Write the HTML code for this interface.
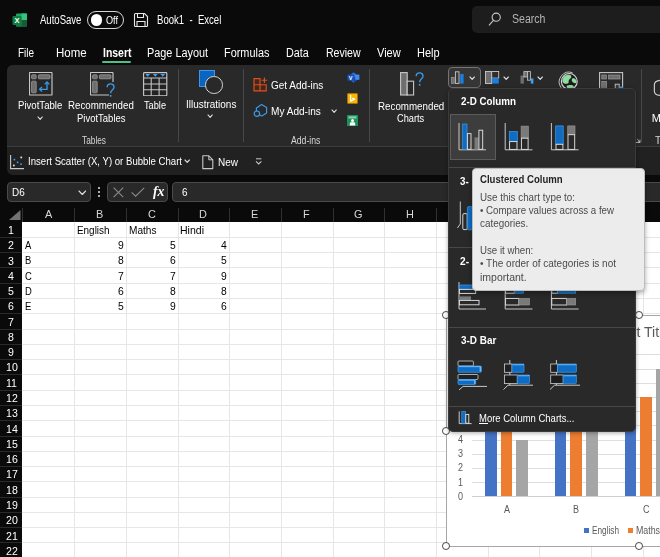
<!DOCTYPE html>
<html lang="en"><head><meta charset="utf-8"><title>Book1 - Excel</title>
<style>
html,body{margin:0;padding:0;}
body{width:660px;height:557px;overflow:hidden;background:#0a0a0a;position:relative;font-family:"Liberation Sans",sans-serif;}
.t{position:absolute;white-space:pre;display:block;will-change:opacity;}
.r{position:absolute;display:block;box-sizing:border-box;}
</style></head><body>
<svg class="r" style="left:12px;top:12px;" width="16" height="16" viewBox="0 0 16 16">
<rect x="4" y="1.5" width="11" height="13" rx="1.2" fill="#21a366"/>
<rect x="9.5" y="1.5" width="5.5" height="6.5" fill="#33c481"/>
<rect x="4" y="8" width="5.5" height="6.5" fill="#107c41"/>
<rect x="9.5" y="8" width="5.5" height="6.5" fill="#185c37"/>
<rect x="0.5" y="4" width="9" height="9" rx="1" fill="#107c41"/>
<text x="5" y="11.3" font-family="Liberation Sans, sans-serif" font-size="7.5" font-weight="700" fill="#fff" text-anchor="middle">X</text>
</svg>
<span class="t" style="left:40.40px;top:12.40px;font-size:12px;line-height:16px;color:#fff;transform:scaleX(0.7956);transform-origin:0 50%;">AutoSave</span>
<div class="r" style="left:87px;top:11px;width:37px;height:18px;background:transparent;border:1.3px solid #d8d8d8;border-radius:9px;"></div>
<div class="r" style="left:90.6px;top:14.1px;width:11.8px;height:11.8px;background:#fff;border-radius:50%;"></div>
<span class="t" style="left:105.80px;top:13.30px;font-size:11px;line-height:14px;color:#fff;transform:scaleX(0.8293);transform-origin:0 50%;">Off</span>
<svg class="r" style="left:133px;top:12px;" width="16" height="16" viewBox="0 0 16 16">
<path d="M1.5 2.5 a1 1 0 0 1 1 -1 H11.5 L14.5 4.5 V13.5 a1 1 0 0 1 -1 1 H2.5 a1 1 0 0 1 -1 -1 Z" fill="none" stroke="#e8e8e8" stroke-width="1.1"/>
<path d="M4.5 1.5 V5.5 H10.5 V1.5" fill="none" stroke="#e8e8e8" stroke-width="1.1"/>
<path d="M4 14.5 V9.5 H12 V14.5" fill="none" stroke="#e8e8e8" stroke-width="1.1"/>
</svg>
<span class="t" style="left:156.70px;top:12.40px;font-size:12px;line-height:16px;color:#fff;transform:scaleX(0.7968);transform-origin:0 50%;">Book1  -  Excel</span>
<div class="r" style="left:472px;top:6.3px;width:200px;height:26.5px;background:#1d1d1d;border-radius:5px;"></div>
<svg class="r" style="left:486px;top:10px;" width="16" height="18" viewBox="0 0 16 18"><circle cx="10.2" cy="7.2" r="4.1" fill="none" stroke="#c8c8c8" stroke-width="1.1"/><path d="M7.4 10.4 L3 15.4" stroke="#c8c8c8" stroke-width="1.1" fill="none"/></svg>
<span class="t" style="left:512.30px;top:11.00px;font-size:12.5px;line-height:16px;color:#b4b4b4;transform:scaleX(0.8433);transform-origin:0 50%;">Search</span>
<span class="t" style="left:18.20px;top:45.10px;font-size:12px;line-height:16px;color:#fff;transform:scaleX(0.8275);transform-origin:0 50%;">File</span>
<span class="t" style="left:55.60px;top:45.10px;font-size:12px;line-height:16px;color:#fff;transform:scaleX(0.9560);transform-origin:0 50%;">Home</span>
<span class="t" style="left:102.50px;top:45.10px;font-size:12px;line-height:16px;color:#fff;transform:scaleX(0.8721);transform-origin:0 50%;font-weight:700;">Insert</span>
<span class="t" style="left:146.50px;top:45.10px;font-size:12px;line-height:16px;color:#fff;transform:scaleX(0.9067);transform-origin:0 50%;">Page Layout</span>
<span class="t" style="left:224.40px;top:45.10px;font-size:12px;line-height:16px;color:#fff;transform:scaleX(0.9078);transform-origin:0 50%;">Formulas</span>
<span class="t" style="left:286.20px;top:45.10px;font-size:12px;line-height:16px;color:#fff;transform:scaleX(0.8995);transform-origin:0 50%;">Data</span>
<span class="t" style="left:325.80px;top:45.10px;font-size:12px;line-height:16px;color:#fff;transform:scaleX(0.8794);transform-origin:0 50%;">Review</span>
<span class="t" style="left:377.00px;top:45.10px;font-size:12px;line-height:16px;color:#fff;transform:scaleX(0.9188);transform-origin:0 50%;">View</span>
<span class="t" style="left:416.70px;top:45.10px;font-size:12px;line-height:16px;color:#fff;transform:scaleX(0.9157);transform-origin:0 50%;">Help</span>
<div class="r" style="left:102px;top:61px;width:29.4px;height:2px;background:#4cc088;border-radius:1px;"></div>
<div class="r" style="left:7px;top:65px;width:660px;height:110px;background:#212121;border-radius:6px 0 0 6px;"></div>
<div class="r" style="left:7px;top:65px;width:660px;height:81px;background:#292929;border-radius:6px 0 0 0;"></div>
<div class="r" style="left:7px;top:146px;width:660px;height:1px;background:#3c3c3c;"></div>
<div class="r" style="left:7px;top:181.5px;width:84px;height:20.5px;background:#292929;border:1px solid #4a4a4a;border-radius:4px;"></div>
<span class="t" style="left:11.80px;top:184.70px;font-size:11.5px;line-height:15px;color:#fff;transform:scaleX(0.8639);transform-origin:0 50%;">D6</span>
<div class="r" style="left:107px;top:181.5px;width:61.3px;height:20.5px;background:#292929;border:1px solid #4a4a4a;border-radius:4px;"></div>
<div class="r" style="left:171.7px;top:181.5px;width:500px;height:20.5px;background:#292929;border:1px solid #4a4a4a;border-radius:4px;"></div>
<span class="t" style="left:182.30px;top:185.20px;font-size:11px;line-height:14px;color:#fff;transform:scaleX(0.9000);transform-origin:0 50%;">6</span>
<div class="r" style="left:0px;top:207px;width:660px;height:350px;background:#0a0a0a;"></div>
<div class="r" style="left:22px;top:222px;width:638px;height:335px;background:#ffffff;"></div>
<div class="r" style="left:74px;top:222px;width:1px;height:335px;background:#e6e6e6;"></div>
<div class="r" style="left:126px;top:222px;width:1px;height:335px;background:#e6e6e6;"></div>
<div class="r" style="left:178px;top:222px;width:1px;height:335px;background:#e6e6e6;"></div>
<div class="r" style="left:229px;top:222px;width:1px;height:335px;background:#e6e6e6;"></div>
<div class="r" style="left:281px;top:222px;width:1px;height:335px;background:#e6e6e6;"></div>
<div class="r" style="left:333px;top:222px;width:1px;height:335px;background:#e6e6e6;"></div>
<div class="r" style="left:384px;top:222px;width:1px;height:335px;background:#e6e6e6;"></div>
<div class="r" style="left:436px;top:222px;width:1px;height:335px;background:#e6e6e6;"></div>
<div class="r" style="left:488px;top:222px;width:1px;height:335px;background:#e6e6e6;"></div>
<div class="r" style="left:539px;top:222px;width:1px;height:335px;background:#e6e6e6;"></div>
<div class="r" style="left:591px;top:222px;width:1px;height:335px;background:#e6e6e6;"></div>
<div class="r" style="left:643px;top:222px;width:1px;height:335px;background:#e6e6e6;"></div>
<div class="r" style="left:694px;top:222px;width:1px;height:335px;background:#e6e6e6;"></div>
<div class="r" style="left:22px;top:237px;width:638px;height:1px;background:#e6e6e6;"></div>
<div class="r" style="left:22px;top:252px;width:638px;height:1px;background:#e6e6e6;"></div>
<div class="r" style="left:22px;top:267px;width:638px;height:1px;background:#e6e6e6;"></div>
<div class="r" style="left:22px;top:283px;width:638px;height:1px;background:#e6e6e6;"></div>
<div class="r" style="left:22px;top:298px;width:638px;height:1px;background:#e6e6e6;"></div>
<div class="r" style="left:22px;top:313px;width:638px;height:1px;background:#e6e6e6;"></div>
<div class="r" style="left:22px;top:329px;width:638px;height:1px;background:#e6e6e6;"></div>
<div class="r" style="left:22px;top:344px;width:638px;height:1px;background:#e6e6e6;"></div>
<div class="r" style="left:22px;top:359px;width:638px;height:1px;background:#e6e6e6;"></div>
<div class="r" style="left:22px;top:374px;width:638px;height:1px;background:#e6e6e6;"></div>
<div class="r" style="left:22px;top:390px;width:638px;height:1px;background:#e6e6e6;"></div>
<div class="r" style="left:22px;top:405px;width:638px;height:1px;background:#e6e6e6;"></div>
<div class="r" style="left:22px;top:420px;width:638px;height:1px;background:#e6e6e6;"></div>
<div class="r" style="left:22px;top:436px;width:638px;height:1px;background:#e6e6e6;"></div>
<div class="r" style="left:22px;top:451px;width:638px;height:1px;background:#e6e6e6;"></div>
<div class="r" style="left:22px;top:466px;width:638px;height:1px;background:#e6e6e6;"></div>
<div class="r" style="left:22px;top:481px;width:638px;height:1px;background:#e6e6e6;"></div>
<div class="r" style="left:22px;top:497px;width:638px;height:1px;background:#e6e6e6;"></div>
<div class="r" style="left:22px;top:512px;width:638px;height:1px;background:#e6e6e6;"></div>
<div class="r" style="left:22px;top:527px;width:638px;height:1px;background:#e6e6e6;"></div>
<div class="r" style="left:22px;top:542px;width:638px;height:1px;background:#e6e6e6;"></div>
<div class="r" style="left:22px;top:558px;width:638px;height:1px;background:#e6e6e6;"></div>
<span class="t" style="left:44.61px;top:207.30px;font-size:11.5px;line-height:15px;color:#d6d6d6;transform:scaleX(0.9500);transform-origin:0 50%;">A</span>
<div class="r" style="left:22px;top:208px;width:1px;height:14px;background:#303030;"></div>
<span class="t" style="left:96.31px;top:207.30px;font-size:11.5px;line-height:15px;color:#d6d6d6;transform:scaleX(0.9500);transform-origin:0 50%;">B</span>
<div class="r" style="left:74px;top:208px;width:1px;height:14px;background:#303030;"></div>
<span class="t" style="left:147.71px;top:207.30px;font-size:11.5px;line-height:15px;color:#d6d6d6;transform:scaleX(0.9500);transform-origin:0 50%;">C</span>
<div class="r" style="left:126px;top:208px;width:1px;height:14px;background:#303030;"></div>
<span class="t" style="left:199.41px;top:207.30px;font-size:11.5px;line-height:15px;color:#d6d6d6;transform:scaleX(0.9500);transform-origin:0 50%;">D</span>
<div class="r" style="left:178px;top:208px;width:1px;height:14px;background:#303030;"></div>
<span class="t" style="left:251.41px;top:207.30px;font-size:11.5px;line-height:15px;color:#d6d6d6;transform:scaleX(0.9500);transform-origin:0 50%;">E</span>
<div class="r" style="left:229px;top:208px;width:1px;height:14px;background:#303030;"></div>
<span class="t" style="left:303.41px;top:207.30px;font-size:11.5px;line-height:15px;color:#d6d6d6;transform:scaleX(0.9500);transform-origin:0 50%;">F</span>
<div class="r" style="left:281px;top:208px;width:1px;height:14px;background:#303030;"></div>
<span class="t" style="left:354.20px;top:207.30px;font-size:11.5px;line-height:15px;color:#d6d6d6;transform:scaleX(0.9500);transform-origin:0 50%;">G</span>
<div class="r" style="left:333px;top:208px;width:1px;height:14px;background:#303030;"></div>
<span class="t" style="left:406.21px;top:207.30px;font-size:11.5px;line-height:15px;color:#d6d6d6;transform:scaleX(0.9500);transform-origin:0 50%;">H</span>
<div class="r" style="left:384px;top:208px;width:1px;height:14px;background:#303030;"></div>
<span class="t" style="left:460.33px;top:207.30px;font-size:11.5px;line-height:15px;color:#d6d6d6;transform:scaleX(0.9500);transform-origin:0 50%;">I</span>
<div class="r" style="left:436px;top:208px;width:1px;height:14px;background:#303030;"></div>
<span class="t" style="left:510.82px;top:207.30px;font-size:11.5px;line-height:15px;color:#d6d6d6;transform:scaleX(0.9500);transform-origin:0 50%;">J</span>
<div class="r" style="left:488px;top:208px;width:1px;height:14px;background:#303030;"></div>
<span class="t" style="left:561.61px;top:207.30px;font-size:11.5px;line-height:15px;color:#d6d6d6;transform:scaleX(0.9500);transform-origin:0 50%;">K</span>
<div class="r" style="left:539px;top:208px;width:1px;height:14px;background:#303030;"></div>
<span class="t" style="left:613.91px;top:207.30px;font-size:11.5px;line-height:15px;color:#d6d6d6;transform:scaleX(0.9500);transform-origin:0 50%;">L</span>
<div class="r" style="left:591px;top:208px;width:1px;height:14px;background:#303030;"></div>
<span class="t" style="left:8.46px;top:222.94px;font-size:11.5px;line-height:15px;color:#fff;transform:scaleX(0.9200);transform-origin:0 50%;">1</span>
<div class="r" style="left:0px;top:237px;width:22px;height:1px;background:#2a2a2a;"></div>
<span class="t" style="left:8.46px;top:238.22px;font-size:11.5px;line-height:15px;color:#fff;transform:scaleX(0.9200);transform-origin:0 50%;">2</span>
<div class="r" style="left:0px;top:252px;width:22px;height:1px;background:#2a2a2a;"></div>
<span class="t" style="left:8.46px;top:253.50px;font-size:11.5px;line-height:15px;color:#fff;transform:scaleX(0.9200);transform-origin:0 50%;">3</span>
<div class="r" style="left:0px;top:267px;width:22px;height:1px;background:#2a2a2a;"></div>
<span class="t" style="left:8.46px;top:268.78px;font-size:11.5px;line-height:15px;color:#fff;transform:scaleX(0.9200);transform-origin:0 50%;">4</span>
<div class="r" style="left:0px;top:283px;width:22px;height:1px;background:#2a2a2a;"></div>
<span class="t" style="left:8.46px;top:284.06px;font-size:11.5px;line-height:15px;color:#fff;transform:scaleX(0.9200);transform-origin:0 50%;">5</span>
<div class="r" style="left:0px;top:298px;width:22px;height:1px;background:#2a2a2a;"></div>
<span class="t" style="left:8.46px;top:299.34px;font-size:11.5px;line-height:15px;color:#fff;transform:scaleX(0.9200);transform-origin:0 50%;">6</span>
<div class="r" style="left:0px;top:313px;width:22px;height:1px;background:#2a2a2a;"></div>
<span class="t" style="left:8.46px;top:314.62px;font-size:11.5px;line-height:15px;color:#fff;transform:scaleX(0.9200);transform-origin:0 50%;">7</span>
<div class="r" style="left:0px;top:329px;width:22px;height:1px;background:#2a2a2a;"></div>
<span class="t" style="left:8.46px;top:329.90px;font-size:11.5px;line-height:15px;color:#fff;transform:scaleX(0.9200);transform-origin:0 50%;">8</span>
<div class="r" style="left:0px;top:344px;width:22px;height:1px;background:#2a2a2a;"></div>
<span class="t" style="left:8.46px;top:345.18px;font-size:11.5px;line-height:15px;color:#fff;transform:scaleX(0.9200);transform-origin:0 50%;">9</span>
<div class="r" style="left:0px;top:359px;width:22px;height:1px;background:#2a2a2a;"></div>
<span class="t" style="left:5.52px;top:360.46px;font-size:11.5px;line-height:15px;color:#fff;transform:scaleX(0.9200);transform-origin:0 50%;">10</span>
<div class="r" style="left:0px;top:374px;width:22px;height:1px;background:#2a2a2a;"></div>
<span class="t" style="left:5.91px;top:375.74px;font-size:11.5px;line-height:15px;color:#fff;transform:scaleX(0.9200);transform-origin:0 50%;">11</span>
<div class="r" style="left:0px;top:390px;width:22px;height:1px;background:#2a2a2a;"></div>
<span class="t" style="left:5.52px;top:391.02px;font-size:11.5px;line-height:15px;color:#fff;transform:scaleX(0.9200);transform-origin:0 50%;">12</span>
<div class="r" style="left:0px;top:405px;width:22px;height:1px;background:#2a2a2a;"></div>
<span class="t" style="left:5.52px;top:406.30px;font-size:11.5px;line-height:15px;color:#fff;transform:scaleX(0.9200);transform-origin:0 50%;">13</span>
<div class="r" style="left:0px;top:420px;width:22px;height:1px;background:#2a2a2a;"></div>
<span class="t" style="left:5.52px;top:421.58px;font-size:11.5px;line-height:15px;color:#fff;transform:scaleX(0.9200);transform-origin:0 50%;">14</span>
<div class="r" style="left:0px;top:436px;width:22px;height:1px;background:#2a2a2a;"></div>
<span class="t" style="left:5.52px;top:436.86px;font-size:11.5px;line-height:15px;color:#fff;transform:scaleX(0.9200);transform-origin:0 50%;">15</span>
<div class="r" style="left:0px;top:451px;width:22px;height:1px;background:#2a2a2a;"></div>
<span class="t" style="left:5.52px;top:452.14px;font-size:11.5px;line-height:15px;color:#fff;transform:scaleX(0.9200);transform-origin:0 50%;">16</span>
<div class="r" style="left:0px;top:466px;width:22px;height:1px;background:#2a2a2a;"></div>
<span class="t" style="left:5.52px;top:467.42px;font-size:11.5px;line-height:15px;color:#fff;transform:scaleX(0.9200);transform-origin:0 50%;">17</span>
<div class="r" style="left:0px;top:481px;width:22px;height:1px;background:#2a2a2a;"></div>
<span class="t" style="left:5.52px;top:482.70px;font-size:11.5px;line-height:15px;color:#fff;transform:scaleX(0.9200);transform-origin:0 50%;">18</span>
<div class="r" style="left:0px;top:497px;width:22px;height:1px;background:#2a2a2a;"></div>
<span class="t" style="left:5.52px;top:497.98px;font-size:11.5px;line-height:15px;color:#fff;transform:scaleX(0.9200);transform-origin:0 50%;">19</span>
<div class="r" style="left:0px;top:512px;width:22px;height:1px;background:#2a2a2a;"></div>
<span class="t" style="left:5.52px;top:513.26px;font-size:11.5px;line-height:15px;color:#fff;transform:scaleX(0.9200);transform-origin:0 50%;">20</span>
<div class="r" style="left:0px;top:527px;width:22px;height:1px;background:#2a2a2a;"></div>
<span class="t" style="left:5.52px;top:528.54px;font-size:11.5px;line-height:15px;color:#fff;transform:scaleX(0.9200);transform-origin:0 50%;">21</span>
<div class="r" style="left:0px;top:542px;width:22px;height:1px;background:#2a2a2a;"></div>
<span class="t" style="left:5.52px;top:543.82px;font-size:11.5px;line-height:15px;color:#fff;transform:scaleX(0.9200);transform-origin:0 50%;">22</span>
<div class="r" style="left:0px;top:558px;width:22px;height:1px;background:#2a2a2a;"></div>
<svg class="r" style="left:9px;top:210px;" width="12" height="10.5" viewBox="0 0 12 10.5"><path d="M11.5 0 V10 H0 Z" fill="#727272"/></svg>
<svg class="r" style="left:28.8px;top:71.8px;" width="24" height="24" viewBox="0 0 24 24"><rect x="0.5" y="0.5" width="22.5" height="22.5" rx="0.6" fill="#262626" stroke="#c8c8c8" stroke-width="1.15"/>
<rect x="2.6" y="2.8" width="4.6" height="4" rx="0.8" fill="#6e6e6e" stroke="#9a9a9a" stroke-width="0.8"/>
<rect x="9.4" y="2.8" width="11.6" height="4" rx="0.8" fill="#6e6e6e" stroke="#9a9a9a" stroke-width="0.8"/>
<rect x="2.6" y="9.2" width="4.6" height="11.6" rx="0.8" fill="#6e6e6e" stroke="#9a9a9a" stroke-width="0.8"/><path d="M10.8 17.3 H18 V10.2" fill="none" stroke="#3a9ae6" stroke-width="1.3"/>
<path d="M13 15 L10.6 17.3 L13 19.6" fill="none" stroke="#3a9ae6" stroke-width="1.3"/>
<path d="M15.7 12.4 L18 10 L20.3 12.4" fill="none" stroke="#3a9ae6" stroke-width="1.3"/></svg>
<span class="t" style="left:18.20px;top:98.20px;font-size:11px;line-height:14px;color:#fff;transform:scaleX(0.8729);transform-origin:0 50%;">PivotTable</span>
<svg class="r" style="left:37.2px;top:115.6px;" width="6.3" height="4.3" viewBox="0 0 6.3 4.3"><path d="M1 1 L3.15 3.30 L5.3 1" fill="none" stroke="#e0e0e0" stroke-width="1.1" stroke-linecap="round" stroke-linejoin="round"/></svg>
<svg class="r" style="left:90px;top:71.8px;" width="24" height="24" viewBox="0 0 24 24"><rect x="0.5" y="0.5" width="22.5" height="22.5" rx="0.6" fill="#262626" stroke="#c8c8c8" stroke-width="1.15"/>
<rect x="2.6" y="2.8" width="4.6" height="4" rx="0.8" fill="#6e6e6e" stroke="#9a9a9a" stroke-width="0.8"/>
<rect x="9.4" y="2.8" width="11.6" height="4" rx="0.8" fill="#6e6e6e" stroke="#9a9a9a" stroke-width="0.8"/>
<rect x="2.6" y="9.2" width="4.6" height="11.6" rx="0.8" fill="#6e6e6e" stroke="#9a9a9a" stroke-width="0.8"/></svg>
<div class="r" style="left:108.6px;top:82px;width:8px;height:15px;background:#292929;"></div>
<svg class="r" style="left:106.3px;top:83px;" width="10" height="16" viewBox="0 0 10 16"><g transform="scale(1.000)"><path d="M1.2 4.2 C1.2 -0.2 8 -0.2 8 4 C8 7 4.6 7 4.6 10.2" fill="none" stroke="#3a9ae6" stroke-width="1.4"/><rect x="3.8" y="12" width="1.7" height="1.7" fill="#3a9ae6"/></g></svg>
<span class="t" style="left:68.20px;top:98.40px;font-size:11px;line-height:14px;color:#fff;transform:scaleX(0.8821);transform-origin:0 50%;">Recommended</span>
<span class="t" style="left:77.30px;top:111.40px;font-size:11px;line-height:14px;color:#fff;transform:scaleX(0.8622);transform-origin:0 50%;">PivotTables</span>
<svg class="r" style="left:143px;top:71.5px;" width="25" height="24.5" viewBox="0 0 25 24.5"><rect x="0.6" y="0.6" width="23.2" height="23.2" rx="0.8" fill="#232323" stroke="#c8c8c8" stroke-width="1.15"/>
<path d="M0.6 6 H23.8 M0.6 11.9 H23.8 M0.6 17.8 H23.8 M8.2 6 V23.8 M16.1 6 V23.8" stroke="#c8c8c8" stroke-width="1.05" fill="none"/>
<path d="M2.3 2 H7 L4.65 4.8 Z M9.9 2 H14.6 L12.25 4.8 Z M17.4 2 H22.1 L19.75 4.8 Z" fill="#3aa8ff"/></svg>
<span class="t" style="left:144.00px;top:98.40px;font-size:11px;line-height:14px;color:#fff;transform:scaleX(0.8366);transform-origin:0 50%;">Table</span>
<span class="t" style="left:81.80px;top:132.60px;font-size:11px;line-height:14px;color:#d6d6d6;transform:scaleX(0.7548);transform-origin:0 50%;">Tables</span>
<div class="r" style="left:178.2px;top:69px;width:1px;height:73px;background:#484848;"></div>
<div class="r" style="left:243.4px;top:69px;width:1px;height:73px;background:#484848;"></div>
<div class="r" style="left:369px;top:69px;width:1px;height:73px;background:#484848;"></div>
<div class="r" style="left:641px;top:69px;width:1px;height:73px;background:#484848;"></div>
<div class="r" style="left:199px;top:70.4px;width:16.2px;height:16.2px;background:#0a64c0;border:1px solid #3f97e8;"></div>
<div class="r" style="left:205.4px;top:76.2px;width:17.6px;height:17.6px;background:#292929;border:1.5px solid #d4d4d4;border-radius:50%;"></div>
<span class="t" style="left:185.90px;top:96.70px;font-size:11px;line-height:14px;color:#fff;transform:scaleX(0.9059);transform-origin:0 50%;">Illustrations</span>
<svg class="r" style="left:207.3px;top:114.3px;" width="6.3" height="4.3" viewBox="0 0 6.3 4.3"><path d="M1 1 L3.15 3.30 L5.3 1" fill="none" stroke="#e0e0e0" stroke-width="1.1" stroke-linecap="round" stroke-linejoin="round"/></svg>
<svg class="r" style="left:253.4px;top:77px;" width="15" height="15" viewBox="0 0 15 15"><path d="M1 1.6 H7 V13.8 H1 Z M1 7.7 H13.2 V13.8 H7" fill="#5a2413" fill-opacity="0.55" stroke="#e0501e" stroke-width="1.15" stroke-linejoin="miter"/>
<path d="M11.4 0.4 V6 M8.6 3.2 H14.2" stroke="#e0501e" stroke-width="1.15" fill="none"/></svg>
<span class="t" style="left:271.00px;top:78.00px;font-size:11px;line-height:14px;color:#fff;transform:scaleX(0.9099);transform-origin:0 50%;">Get Add-ins</span>
<svg class="r" style="left:253px;top:103px;" width="16" height="15" viewBox="0 0 16 15"><path d="M3.4 8 V5 L8.6 1.4 L13.6 4.5 V10 L8.8 13 L7.2 12.2" fill="none" stroke="#3a9ae6" stroke-width="1.2" stroke-linejoin="round" stroke-linecap="round"/>
<circle cx="3.9" cy="10.7" r="2.7" fill="none" stroke="#3a9ae6" stroke-width="1.2"/></svg>
<span class="t" style="left:271.00px;top:104.30px;font-size:11px;line-height:14px;color:#fff;transform:scaleX(0.9153);transform-origin:0 50%;">My Add-ins</span>
<svg class="r" style="left:330.6px;top:109.2px;" width="6.3" height="4.3" viewBox="0 0 6.3 4.3"><path d="M1 1 L3.15 3.30 L5.3 1" fill="none" stroke="#e0e0e0" stroke-width="1.1" stroke-linecap="round" stroke-linejoin="round"/></svg>
<span class="t" style="left:291.40px;top:132.60px;font-size:11px;line-height:14px;color:#d6d6d6;transform:scaleX(0.7883);transform-origin:0 50%;">Add-ins</span>
<svg class="r" style="left:346.5px;top:72px;" width="13" height="11.5" viewBox="0 0 13 11.5"><path d="M6.6 0.2 L11.4 4 V7 L6.6 10.8 L1.8 7 V4 Z" fill="#2a6fd8"/>
<path d="M6.6 5.5 L11.4 4 V7 L6.6 10.8 Z" fill="#1746a8"/>
<rect x="8.2" y="2.6" width="4.2" height="5.2" fill="#3f8cf0"/>
<rect x="0.4" y="2.6" width="6.4" height="6.2" rx="0.8" fill="#1550b8"/>
<text x="3.6" y="7.9" font-family="Liberation Sans, sans-serif" font-size="5.6" font-weight="700" fill="#fff" text-anchor="middle">V</text></svg>
<svg class="r" style="left:347.3px;top:93px;" width="11" height="11" viewBox="0 0 11 11"><rect x="-0.5" y="-0.5" width="12" height="12" fill="#15152e"/><rect x="0.4" y="0.4" width="10.2" height="10.2" fill="#fbb400"/><path d="M3.6 2 V8.2 L7.6 6.2 L5.2 5" fill="none" stroke="#fff" stroke-width="1.3" stroke-linejoin="round"/></svg>
<svg class="r" style="left:347.3px;top:115px;" width="11" height="11" viewBox="0 0 11 11"><rect width="11" height="11" fill="#1e8e5a"/><rect x="1.5" y="1.3" width="8" height="2.2" fill="#7fd3a6"/><circle cx="5.5" cy="5.4" r="1.5" fill="#fff"/><path d="M2.8 10.5 V8.6 a1.4 1.4 0 0 1 1.4 -1.4 H6.8 a1.4 1.4 0 0 1 1.4 1.4 V10.5 Z" fill="#fff"/></svg>
<svg class="r" style="left:399.5px;top:71.5px;" width="15" height="24" viewBox="0 0 15 24"><rect x="0.6" y="0.6" width="6.6" height="22.4" fill="#6e6e6e" stroke="#c8c8c8" stroke-width="1.1"/>
<rect x="7.2" y="9.2" width="6.4" height="13.8" fill="#292929" stroke="#c8c8c8" stroke-width="1.1"/></svg>
<svg class="r" style="left:415px;top:72px;" width="10" height="16" viewBox="0 0 10 16"><g transform="scale(1.000)"><path d="M1.2 4.2 C1.2 -0.2 8 -0.2 8 4 C8 7 4.6 7 4.6 10.2" fill="none" stroke="#3a9ae6" stroke-width="1.4"/><rect x="3.8" y="12" width="1.7" height="1.7" fill="#3a9ae6"/></g></svg>
<span class="t" style="left:377.70px;top:98.50px;font-size:11px;line-height:14px;color:#fff;transform:scaleX(0.8888);transform-origin:0 50%;">Recommended</span>
<span class="t" style="left:397.40px;top:111.40px;font-size:11px;line-height:14px;color:#fff;transform:scaleX(0.8395);transform-origin:0 50%;">Charts</span>
<div class="r" style="left:448px;top:67px;width:32.5px;height:20.5px;background:#363636;border:1px solid #757575;border-radius:4px;"></div>
<svg class="r" style="left:451px;top:71px;" width="14" height="13" viewBox="0 0 14 13"><rect x="0.4" y="6.4" width="2.8" height="6" fill="#6e6e6e" stroke="#9a9a9a" stroke-width="0.7"/>
<rect x="4.4" y="0.8" width="3.6" height="11.6" fill="#3a3a3a" stroke="#c8c8c8" stroke-width="0.9"/>
<rect x="9.2" y="3" width="3.4" height="9.6" fill="#1a7fe0"/></svg>
<svg class="r" style="left:468.8px;top:75.8px;" width="6.4" height="4.3" viewBox="0 0 6.4 4.3"><path d="M1 1 L3.20 3.30 L5.4 1" fill="none" stroke="#e0e0e0" stroke-width="1.1" stroke-linecap="round" stroke-linejoin="round"/></svg>
<svg class="r" style="left:485px;top:71px;" width="15" height="13" viewBox="0 0 15 13"><rect x="0.5" y="0.5" width="6.2" height="12" fill="#6e6e6e" stroke="#c8c8c8" stroke-width="0.9"/>
<rect x="6.7" y="0.5" width="7" height="6.6" fill="#2e2e2e" stroke="#c8c8c8" stroke-width="0.9"/>
<rect x="7" y="7.2" width="6.8" height="5.4" fill="#1a7fe0"/></svg>
<svg class="r" style="left:503.2px;top:75.8px;" width="6.4" height="4.3" viewBox="0 0 6.4 4.3"><path d="M1 1 L3.20 3.30 L5.4 1" fill="none" stroke="#e0e0e0" stroke-width="1.1" stroke-linecap="round" stroke-linejoin="round"/></svg>
<svg class="r" style="left:519.5px;top:71px;" width="15" height="13" viewBox="0 0 15 13"><rect x="0.5" y="4.6" width="3.4" height="8" fill="#6e6e6e"/>
<rect x="3.9" y="0.6" width="3.6" height="5.4" fill="#6e6e6e" stroke="#c8c8c8" stroke-width="0.8"/>
<rect x="7.5" y="0.6" width="3" height="8.6" fill="#3a3a3a" stroke="#c8c8c8" stroke-width="0.8"/>
<rect x="10.8" y="7.4" width="2.6" height="5.2" fill="#3aa0f3"/></svg>
<svg class="r" style="left:537.4000000000001px;top:75.8px;" width="6.4" height="4.3" viewBox="0 0 6.4 4.3"><path d="M1 1 L3.20 3.30 L5.4 1" fill="none" stroke="#e0e0e0" stroke-width="1.1" stroke-linecap="round" stroke-linejoin="round"/></svg>
<svg class="r" style="left:557.5px;top:71.3px;" width="22" height="22" viewBox="0 0 22 22"><path d="M3.2 16.8 A9.8 9.8 0 0 1 14.6 1.8" fill="none" stroke="#bdbdbd" stroke-width="1"/>
<circle cx="11.3" cy="10.4" r="7.9" fill="#1c1c1c" stroke="#d8d8d8" stroke-width="1.1"/>
<path d="M6.4 5.2 C8.6 3.4 12.4 3 13.2 5.2 C13.8 7 11.6 7.6 10.8 9.2 C10.2 10.8 11.4 12 9.6 12.6 C7.6 13.2 5 12.4 4.4 10.4 C4 8.4 5 6.4 6.4 5.2 Z" fill="#8fdca3"/>
<path d="M14.2 7.6 C16 6.4 18.4 8 18.6 10.4 C18.6 12.2 17 12.6 15.6 11.8 C14 11 13 9 14.2 7.6 Z" fill="#8fdca3"/>
<path d="M9.2 14.6 C11.4 13.6 15 14 15.8 15.4 C15 17.2 12.2 18 10 17.4 C8.6 16.8 8.2 15.2 9.2 14.6 Z" fill="#8fdca3"/></svg>
<svg class="r" style="left:599px;top:71.5px;" width="25" height="24" viewBox="0 0 25 24"><rect x="0.6" y="0.6" width="23" height="23" fill="none" stroke="#c8c8c8" stroke-width="1.1"/>
<rect x="2.8" y="3" width="4.6" height="4" fill="#6e6e6e" stroke="#9a9a9a" stroke-width="0.7"/>
<rect x="9.6" y="3" width="11.4" height="4" fill="#6e6e6e" stroke="#9a9a9a" stroke-width="0.7"/>
<rect x="2.8" y="9.4" width="4.6" height="12" fill="#6e6e6e" stroke="#9a9a9a" stroke-width="0.7"/>
<rect x="16.2" y="12.2" width="4" height="10" fill="#3a3a3a" stroke="#c8c8c8" stroke-width="0.9"/>
<rect x="20.2" y="14.6" width="3.6" height="8" fill="#3aa0f3"/></svg>
<svg class="r" style="left:653px;top:79px;" width="8" height="17" viewBox="0 0 8 17"><path d="M7.8 1.2 C3.4 1.6 1.4 2.8 1.4 5.4 V12.4 C1.4 15 3.4 16 7.8 16.6" fill="none" stroke="#c8c8c8" stroke-width="1.2"/></svg>
<span class="t" style="left:651.70px;top:111.30px;font-size:11px;line-height:14px;color:#fff;">M</span>
<span class="t" style="left:654.60px;top:132.70px;font-size:11px;line-height:14px;color:#d6d6d6;transform:scaleX(0.9000);transform-origin:0 50%;">Te</span>
<svg class="r" style="left:635px;top:136.5px;" width="6" height="6" viewBox="0 0 6 6"><path d="M0.5 0.5 V5.5 H5.5 M2.2 2 L5 4.8 M5 2.6 V4.8 H2.8" fill="none" stroke="#c8c8c8" stroke-width="0.8"/></svg>
<svg class="r" style="left:10px;top:155px;" width="15" height="15" viewBox="0 0 15 15"><path d="M0.6 0 V13.6 H14" fill="none" stroke="#c8c8c8" stroke-width="1.1"/>
<rect x="3" y="9.6" width="1.7" height="1.7" fill="#e0e0e0"/><rect x="3.6" y="3.8" width="1.6" height="1.6" fill="#3aa0f3"/>
<rect x="6.8" y="6.6" width="1.6" height="1.6" fill="#3aa0f3"/><rect x="10.4" y="1.6" width="1.7" height="1.7" fill="#e8e8e8"/><rect x="10.2" y="8.4" width="1.6" height="1.6" fill="#3aa0f3"/></svg>
<span class="t" style="left:27.70px;top:154.20px;font-size:11px;line-height:14px;color:#fff;transform:scaleX(0.8726);transform-origin:0 50%;">Insert Scatter (X, Y) or Bubble Chart</span>
<svg class="r" style="left:183.8px;top:158.8px;" width="6.4" height="4.3" viewBox="0 0 6.4 4.3"><path d="M1 1 L3.20 3.30 L5.4 1" fill="none" stroke="#e0e0e0" stroke-width="1.1" stroke-linecap="round" stroke-linejoin="round"/></svg>
<svg class="r" style="left:202px;top:154.5px;" width="12" height="15" viewBox="0 0 12 15"><path d="M0.8 0.8 H6.8 L10.8 4.8 V13.6 H0.8 Z" fill="none" stroke="#c8c8c8" stroke-width="1.1" stroke-linejoin="round"/><path d="M6.8 0.8 V4.8 H10.8" fill="none" stroke="#c8c8c8" stroke-width="1"/></svg>
<span class="t" style="left:217.50px;top:154.50px;font-size:11px;line-height:14px;color:#fff;transform:scaleX(0.9089);transform-origin:0 50%;">New</span>
<svg class="r" style="left:254.5px;top:158px;" width="8" height="8" viewBox="0 0 8 8"><path d="M1 0.8 H6.4" stroke="#c8c8c8" stroke-width="1" fill="none"/><path d="M1 3.4 L3.7 6 L6.4 3.4" fill="none" stroke="#c8c8c8" stroke-width="1.1"/></svg>
<svg class="r" style="left:78.2px;top:190px;" width="8.6" height="5.5" viewBox="0 0 8.6 5.5"><path d="M1 1 L4.30 4.50 L7.6 1" fill="none" stroke="#e0e0e0" stroke-width="1.1" stroke-linecap="round" stroke-linejoin="round"/></svg>
<div class="r" style="left:98.2px;top:187.4px;width:1.8px;height:1.8px;background:#e0e0e0;border-radius:50%;"></div>
<div class="r" style="left:98.2px;top:191.4px;width:1.8px;height:1.8px;background:#e0e0e0;border-radius:50%;"></div>
<div class="r" style="left:98.2px;top:195.4px;width:1.8px;height:1.8px;background:#e0e0e0;border-radius:50%;"></div>
<svg class="r" style="left:113px;top:186.5px;" width="11" height="11" viewBox="0 0 11 11"><path d="M0.6 0.6 L10.2 10.2 M10.2 0.6 L0.6 10.2" stroke="#8a8a8a" stroke-width="1.1" fill="none"/></svg>
<svg class="r" style="left:131px;top:187px;" width="14" height="10" viewBox="0 0 14 10"><path d="M0.6 5.4 L4.6 9.2 L13.2 0.8" stroke="#8a8a8a" stroke-width="1.1" fill="none"/></svg>
<span class="t" style="left:152.50px;top:183.00px;font-size:14px;line-height:18px;color:#fff;transform:scaleX(0.9861);transform-origin:0 50%;font-weight:700;font-style:italic;font-family:Liberation Serif,serif;">fx</span>
<span class="t" style="left:76.50px;top:222.74px;font-size:11.5px;line-height:15px;color:#000;transform:scaleX(0.8617);transform-origin:0 50%;">English</span>
<span class="t" style="left:128.50px;top:222.74px;font-size:11.5px;line-height:15px;color:#000;transform:scaleX(0.8781);transform-origin:0 50%;">Maths</span>
<span class="t" style="left:180.30px;top:222.74px;font-size:11.5px;line-height:15px;color:#000;transform:scaleX(0.9158);transform-origin:0 50%;">Hindi</span>
<span class="t" style="left:24.80px;top:238.02px;font-size:11.5px;line-height:15px;color:#000;transform:scaleX(0.8200);transform-origin:0 50%;">A</span>
<span class="t" style="left:118.04px;top:238.02px;font-size:11.5px;line-height:15px;color:#000;transform:scaleX(0.9000);transform-origin:0 50%;">9</span>
<span class="t" style="left:169.74px;top:238.02px;font-size:11.5px;line-height:15px;color:#000;transform:scaleX(0.9000);transform-origin:0 50%;">5</span>
<span class="t" style="left:221.44px;top:238.02px;font-size:11.5px;line-height:15px;color:#000;transform:scaleX(0.9000);transform-origin:0 50%;">4</span>
<span class="t" style="left:24.80px;top:253.30px;font-size:11.5px;line-height:15px;color:#000;transform:scaleX(0.8200);transform-origin:0 50%;">B</span>
<span class="t" style="left:118.04px;top:253.30px;font-size:11.5px;line-height:15px;color:#000;transform:scaleX(0.9000);transform-origin:0 50%;">8</span>
<span class="t" style="left:169.74px;top:253.30px;font-size:11.5px;line-height:15px;color:#000;transform:scaleX(0.9000);transform-origin:0 50%;">6</span>
<span class="t" style="left:221.44px;top:253.30px;font-size:11.5px;line-height:15px;color:#000;transform:scaleX(0.9000);transform-origin:0 50%;">5</span>
<span class="t" style="left:24.80px;top:268.58px;font-size:11.5px;line-height:15px;color:#000;transform:scaleX(0.8200);transform-origin:0 50%;">C</span>
<span class="t" style="left:118.04px;top:268.58px;font-size:11.5px;line-height:15px;color:#000;transform:scaleX(0.9000);transform-origin:0 50%;">7</span>
<span class="t" style="left:169.74px;top:268.58px;font-size:11.5px;line-height:15px;color:#000;transform:scaleX(0.9000);transform-origin:0 50%;">7</span>
<span class="t" style="left:221.44px;top:268.58px;font-size:11.5px;line-height:15px;color:#000;transform:scaleX(0.9000);transform-origin:0 50%;">9</span>
<span class="t" style="left:24.80px;top:283.86px;font-size:11.5px;line-height:15px;color:#000;transform:scaleX(0.8200);transform-origin:0 50%;">D</span>
<span class="t" style="left:118.04px;top:283.86px;font-size:11.5px;line-height:15px;color:#000;transform:scaleX(0.9000);transform-origin:0 50%;">6</span>
<span class="t" style="left:169.74px;top:283.86px;font-size:11.5px;line-height:15px;color:#000;transform:scaleX(0.9000);transform-origin:0 50%;">8</span>
<span class="t" style="left:221.44px;top:283.86px;font-size:11.5px;line-height:15px;color:#000;transform:scaleX(0.9000);transform-origin:0 50%;">8</span>
<span class="t" style="left:24.80px;top:299.14px;font-size:11.5px;line-height:15px;color:#000;transform:scaleX(0.8200);transform-origin:0 50%;">E</span>
<span class="t" style="left:118.04px;top:299.14px;font-size:11.5px;line-height:15px;color:#000;transform:scaleX(0.9000);transform-origin:0 50%;">5</span>
<span class="t" style="left:169.74px;top:299.14px;font-size:11.5px;line-height:15px;color:#000;transform:scaleX(0.9000);transform-origin:0 50%;">9</span>
<span class="t" style="left:221.44px;top:299.14px;font-size:11.5px;line-height:15px;color:#000;transform:scaleX(0.9000);transform-origin:0 50%;">6</span>
<div class="r" style="left:446px;top:315px;width:230px;height:232px;background:#fff;border:1px solid #a6a6a6;"></div>
<div class="r" style="left:471.7px;top:496px;width:200px;height:1px;background:#cfcfcf;"></div>
<span class="t" style="left:458.20px;top:489.80px;font-size:10px;line-height:13px;color:#595959;transform:scaleX(0.9000);transform-origin:0 50%;">0</span>
<div class="r" style="left:471.7px;top:482px;width:200px;height:1px;background:#dedede;"></div>
<span class="t" style="left:458.20px;top:475.62px;font-size:10px;line-height:13px;color:#595959;transform:scaleX(0.9000);transform-origin:0 50%;">1</span>
<div class="r" style="left:471.7px;top:468px;width:200px;height:1px;background:#dedede;"></div>
<span class="t" style="left:458.20px;top:461.44px;font-size:10px;line-height:13px;color:#595959;transform:scaleX(0.9000);transform-origin:0 50%;">2</span>
<div class="r" style="left:471.7px;top:454px;width:200px;height:1px;background:#dedede;"></div>
<span class="t" style="left:458.20px;top:447.26px;font-size:10px;line-height:13px;color:#595959;transform:scaleX(0.9000);transform-origin:0 50%;">3</span>
<div class="r" style="left:471.7px;top:440px;width:200px;height:1px;background:#dedede;"></div>
<span class="t" style="left:458.20px;top:433.08px;font-size:10px;line-height:13px;color:#595959;transform:scaleX(0.9000);transform-origin:0 50%;">4</span>
<div class="r" style="left:471.7px;top:425px;width:200px;height:1px;background:#dedede;"></div>
<span class="t" style="left:458.20px;top:418.90px;font-size:10px;line-height:13px;color:#595959;transform:scaleX(0.9000);transform-origin:0 50%;">5</span>
<div class="r" style="left:471.7px;top:411px;width:200px;height:1px;background:#dedede;"></div>
<span class="t" style="left:458.20px;top:404.72px;font-size:10px;line-height:13px;color:#595959;transform:scaleX(0.9000);transform-origin:0 50%;">6</span>
<div class="r" style="left:471.7px;top:397px;width:200px;height:1px;background:#dedede;"></div>
<span class="t" style="left:458.20px;top:390.54px;font-size:10px;line-height:13px;color:#595959;transform:scaleX(0.9000);transform-origin:0 50%;">7</span>
<div class="r" style="left:471.7px;top:383px;width:200px;height:1px;background:#dedede;"></div>
<span class="t" style="left:458.20px;top:376.36px;font-size:10px;line-height:13px;color:#595959;transform:scaleX(0.9000);transform-origin:0 50%;">8</span>
<div class="r" style="left:471.7px;top:369px;width:200px;height:1px;background:#dedede;"></div>
<span class="t" style="left:458.20px;top:362.18px;font-size:10px;line-height:13px;color:#595959;transform:scaleX(0.9000);transform-origin:0 50%;">9</span>
<div class="r" style="left:471.7px;top:354px;width:200px;height:1px;background:#dedede;"></div>
<span class="t" style="left:458.20px;top:348.00px;font-size:10px;line-height:13px;color:#595959;transform:scaleX(0.9000);transform-origin:0 50%;">10</span>
<div class="r" style="left:485.0px;top:368.5px;width:11.7px;height:127.62px;background:#4472c4;"></div>
<div class="r" style="left:500.5px;top:425.5px;width:11.7px;height:70.90000000000003px;background:#ed7d31;"></div>
<div class="r" style="left:516.0px;top:439.5px;width:11.7px;height:56.71999999999997px;background:#a5a5a5;"></div>
<div class="r" style="left:554.5px;top:383.0px;width:11.7px;height:113.44px;background:#4472c4;"></div>
<div class="r" style="left:570.0px;top:411.0px;width:11.7px;height:85.07999999999998px;background:#ed7d31;"></div>
<div class="r" style="left:586.0px;top:425.5px;width:11.7px;height:70.90000000000003px;background:#a5a5a5;"></div>
<div class="r" style="left:624.5px;top:397.0px;width:11.7px;height:99.25999999999999px;background:#4472c4;"></div>
<div class="r" style="left:640.0px;top:397.0px;width:11.7px;height:99.25999999999999px;background:#ed7d31;"></div>
<div class="r" style="left:655.5px;top:368.5px;width:11.7px;height:127.62px;background:#a5a5a5;"></div>
<span class="t" style="left:503.70px;top:502.80px;font-size:10px;line-height:13px;color:#595959;transform:scaleX(0.9000);transform-origin:0 50%;">A</span>
<span class="t" style="left:573.35px;top:502.80px;font-size:10px;line-height:13px;color:#595959;transform:scaleX(0.9000);transform-origin:0 50%;">B</span>
<span class="t" style="left:642.75px;top:502.80px;font-size:10px;line-height:13px;color:#595959;transform:scaleX(0.9000);transform-origin:0 50%;">C</span>
<span class="t" style="left:606.40px;top:323.00px;font-size:14px;line-height:18px;color:#595959;transform:scaleX(1.0031);transform-origin:0 50%;">Chart Title</span>
<div class="r" style="left:584.3px;top:527.7px;width:5px;height:5px;background:#4472c4;"></div>
<span class="t" style="left:592.30px;top:523.30px;font-size:10.5px;line-height:14px;color:#595959;transform:scaleX(0.7840);transform-origin:0 50%;">English</span>
<div class="r" style="left:628.3px;top:527.7px;width:5px;height:5px;background:#ed7d31;"></div>
<span class="t" style="left:635.70px;top:523.30px;font-size:10.5px;line-height:14px;color:#595959;transform:scaleX(0.8394);transform-origin:0 50%;">Maths</span>
<div class="r" style="left:442.1px;top:311.1px;width:7.8px;height:7.8px;background:#fff;border:1.2px solid #404040;border-radius:50%;"></div>
<div class="r" style="left:635.1px;top:311.1px;width:7.8px;height:7.8px;background:#fff;border:1.2px solid #404040;border-radius:50%;"></div>
<div class="r" style="left:442.1px;top:426.8px;width:7.8px;height:7.8px;background:#fff;border:1.2px solid #404040;border-radius:50%;"></div>
<div class="r" style="left:442.1px;top:542.1px;width:7.8px;height:7.8px;background:#fff;border:1.2px solid #404040;border-radius:50%;"></div>
<div class="r" style="left:635.1px;top:542.1px;width:7.8px;height:7.8px;background:#fff;border:1.2px solid #404040;border-radius:50%;"></div>
<div class="r" style="left:448px;top:88px;width:188px;height:344px;background:#292929;border:1px solid #3d3b39;border-radius:5px;box-shadow:0 1px 4px rgba(0,0,0,.35);"></div>
<span class="t" style="left:460.50px;top:94.20px;font-size:10.5px;line-height:14px;color:#fff;transform:scaleX(0.9336);transform-origin:0 50%;font-weight:700;">2-D Column</span>
<div class="r" style="left:449.5px;top:113.5px;width:46px;height:46px;background:#3d3d3d;border:1px solid #5c5c5c;"></div>
<svg class="r" style="left:456px;top:120px;" width="34" height="34" viewBox="0 0 34 34"><path d="M3 3 V29.8 H30" fill="none" stroke="#c8c8c8" stroke-width="1"/>
<rect x="6.7" y="4" width="4.3" height="25.3" fill="#0f6cc4" stroke="#3f9ceb" stroke-width="0.7"/>
<rect x="11.4" y="13.6" width="3.6" height="15.7" fill="#3d3d3d" stroke="#e6e6e6" stroke-width="0.9"/>
<rect x="18.5" y="17.4" width="4" height="11.9" fill="#7a7a7a"/>
<rect x="22.9" y="10.2" width="3.8" height="19.1" fill="#3d3d3d" stroke="#e6e6e6" stroke-width="0.9"/></svg>
<svg class="r" style="left:502px;top:120px;" width="34" height="34" viewBox="0 0 34 34"><path d="M3.2 3 V29.8 H30.5" fill="none" stroke="#c8c8c8" stroke-width="1"/>
<rect x="7.3" y="11.6" width="8" height="9.8" fill="#0f6cc4" stroke="#3f9ceb" stroke-width="0.7"/>
<rect x="7.6" y="21.6" width="7.4" height="7.8" fill="#292929" stroke="#e6e6e6" stroke-width="0.9"/>
<rect x="19.1" y="6.1" width="7.3" height="11.9" fill="#7a7a7a" stroke="#9a9a9a" stroke-width="0.6"/>
<rect x="19.4" y="18.2" width="6.7" height="11.2" fill="#292929" stroke="#e6e6e6" stroke-width="0.9"/></svg>
<svg class="r" style="left:548px;top:120px;" width="34" height="34" viewBox="0 0 34 34"><path d="M3.4 3 V29.8 H30.6" fill="none" stroke="#c8c8c8" stroke-width="1"/>
<rect x="7.7" y="5.9" width="7.5" height="18.2" fill="#0f6cc4" stroke="#3f9ceb" stroke-width="0.7"/>
<rect x="8" y="24.3" width="6.9" height="5.1" fill="#292929" stroke="#e6e6e6" stroke-width="0.9"/>
<rect x="19.7" y="5.9" width="7.3" height="8.6" fill="#7a7a7a" stroke="#9a9a9a" stroke-width="0.6"/>
<rect x="20" y="14.7" width="6.7" height="14.7" fill="#292929" stroke="#e6e6e6" stroke-width="0.9"/></svg>
<div class="r" style="left:449px;top:167px;width:186px;height:1px;background:#474747;"></div>
<span class="t" style="left:460.30px;top:174.00px;font-size:10.5px;line-height:14px;color:#fff;transform:scaleX(0.9336);transform-origin:0 50%;font-weight:700;clip-path:inset(0 84.5% 0 0);">3-D Column</span>
<svg class="r" style="left:456px;top:200px;" width="20" height="32" viewBox="0 0 20 32"><path d="M4.3 1.5 V24 L1.4 28" fill="none" stroke="#c8c8c8" stroke-width="1"/>
<rect x="6.8" y="13.6" width="4.4" height="16" rx="1.2" fill="#292929" stroke="#e6e6e6" stroke-width="0.9"/>
<rect x="11.4" y="6.6" width="5" height="23.2" rx="1.2" fill="#0f6cc4" stroke="#3f9ceb" stroke-width="0.7"/></svg>
<div class="r" style="left:449px;top:246.5px;width:186px;height:1px;background:#474747;"></div>
<span class="t" style="left:460.30px;top:254.00px;font-size:10.5px;line-height:14px;color:#fff;transform:scaleX(0.9640);transform-origin:0 50%;font-weight:700;clip-path:inset(0 75.5% 0 0);">2-D Bar</span>
<svg class="r" style="left:456px;top:280px;" width="34" height="32" viewBox="0 0 34 32"><path d="M3 2 V29 H30" fill="none" stroke="#c8c8c8" stroke-width="1"/>
<rect x="3.4" y="5" width="22" height="4.2" fill="#0f6cc4" stroke="#3f9ceb" stroke-width="0.7"/>
<rect x="3.4" y="9.4" width="16.3" height="4" fill="#292929" stroke="#e6e6e6" stroke-width="0.9"/>
<rect x="3.4" y="16.4" width="11.6" height="3.8" fill="#7a7a7a"/>
<rect x="3.4" y="20.4" width="19.6" height="4.4" fill="#292929" stroke="#e6e6e6" stroke-width="0.9"/></svg>
<svg class="r" style="left:502px;top:280px;" width="34" height="32" viewBox="0 0 34 32"><path d="M3.2 2 V29 H30.5" fill="none" stroke="#c8c8c8" stroke-width="1"/>
<rect x="3.6" y="6.4" width="8.7" height="6.8" fill="#292929" stroke="#e6e6e6" stroke-width="0.9"/>
<rect x="12.3" y="6.2" width="9.1" height="7" fill="#0f6cc4" stroke="#3f9ceb" stroke-width="0.7"/>
<rect x="3.6" y="18.4" width="13.3" height="6.6" fill="#292929" stroke="#e6e6e6" stroke-width="0.9"/>
<rect x="16.9" y="18.4" width="10.6" height="6.6" fill="#7a7a7a" stroke="#9a9a9a" stroke-width="0.6"/></svg>
<svg class="r" style="left:548px;top:280px;" width="34" height="32" viewBox="0 0 34 32"><path d="M3.4 2 V29 H30.6" fill="none" stroke="#c8c8c8" stroke-width="1"/>
<rect x="3.8" y="6.4" width="5.7" height="6.8" fill="#292929" stroke="#e6e6e6" stroke-width="0.9"/>
<rect x="9.5" y="6.2" width="18.2" height="7" fill="#0f6cc4" stroke="#3f9ceb" stroke-width="0.7"/>
<rect x="3.8" y="18.4" width="14.8" height="6.6" fill="#292929" stroke="#e6e6e6" stroke-width="0.9"/>
<rect x="18.6" y="18.4" width="9.1" height="6.6" fill="#7a7a7a" stroke="#9a9a9a" stroke-width="0.6"/></svg>
<div class="r" style="left:449px;top:326.5px;width:186px;height:1px;background:#474747;"></div>
<span class="t" style="left:460.70px;top:333.00px;font-size:10.5px;line-height:14px;color:#fff;transform:scaleX(0.9452);transform-origin:0 50%;font-weight:700;">3-D Bar</span>
<svg class="r" style="left:456px;top:358px;" width="34" height="34" viewBox="0 0 34 34"><rect x="2" y="3" width="15.4" height="5" rx="1" fill="#202020" stroke="#cfcfcf" stroke-width="0.8"/>
<rect x="2" y="8" width="23.4" height="6.3" rx="1" fill="#0f6cc4" stroke="#3f9ceb" stroke-width="0.7"/>
<path d="M2.6 8.6 H24.8" stroke="#6bb8f7" stroke-width="1.1"/><rect x="23.6" y="8.6" width="1.6" height="5.2" rx="0.8" fill="#6bb8f7"/>
<rect x="2" y="16.5" width="20" height="5" rx="1" fill="#202020" stroke="#cfcfcf" stroke-width="0.8"/>
<rect x="2" y="21.5" width="17.7" height="5" rx="1" fill="#0f6cc4" stroke="#3f9ceb" stroke-width="0.7"/>
<path d="M2.6 22.1 H19.2" stroke="#6bb8f7" stroke-width="1.1"/><rect x="18" y="22" width="1.5" height="4.2" rx="0.7" fill="#6bb8f7"/>
<path d="M3 32 L7 28.4 H31" fill="none" stroke="#c8c8c8" stroke-width="1"/></svg>
<svg class="r" style="left:502px;top:358px;" width="34" height="34" viewBox="0 0 34 34"><path d="M7.8 2 V27.2 M1.5 31.5 L6 27.2 H31" fill="none" stroke="#c8c8c8" stroke-width="1"/>
<rect x="2.5" y="6" width="7.5" height="8.3" fill="#202020" stroke="#cfcfcf" stroke-width="0.8"/>
<rect x="10" y="6" width="12" height="8.3" rx="0.8" fill="#0f6cc4" stroke="#3f9ceb" stroke-width="0.7"/>
<path d="M10.4 6.8 H21 L22 6.2" stroke="#6bb8f7" stroke-width="1.1" fill="none"/>
<rect x="2.5" y="17" width="12.8" height="8.6" fill="#1c1c1c" stroke="#cfcfcf" stroke-width="0.8"/>
<rect x="15.3" y="17" width="12.2" height="8.6" rx="0.8" fill="#0f6cc4" stroke="#3f9ceb" stroke-width="0.7"/>
<path d="M15.7 17.8 H26.5 L27.5 17.2" stroke="#6bb8f7" stroke-width="1.1" fill="none"/></svg>
<svg class="r" style="left:548px;top:358px;" width="34" height="34" viewBox="0 0 34 34"><path d="M8.4 2 V27.2 M2 31.5 L6.5 27.2 H32" fill="none" stroke="#c8c8c8" stroke-width="1"/>
<rect x="2.7" y="6" width="6.8" height="8.3" fill="#202020" stroke="#cfcfcf" stroke-width="0.8"/>
<rect x="9.5" y="6" width="18.9" height="8.3" rx="0.8" fill="#0f6cc4" stroke="#3f9ceb" stroke-width="0.7"/>
<path d="M9.9 6.8 H27.4 L28.4 6.2" stroke="#6bb8f7" stroke-width="1.1" fill="none"/>
<rect x="2.7" y="17" width="12.5" height="8.6" fill="#1c1c1c" stroke="#cfcfcf" stroke-width="0.8"/>
<rect x="15.2" y="17" width="13.2" height="8.6" rx="0.8" fill="#0f6cc4" stroke="#3f9ceb" stroke-width="0.7"/>
<path d="M15.6 17.8 H27.4 L28.4 17.2" stroke="#6bb8f7" stroke-width="1.1" fill="none"/></svg>
<div class="r" style="left:449px;top:406px;width:186px;height:1px;background:#474747;"></div>
<svg class="r" style="left:457.5px;top:411px;" width="15" height="14" viewBox="0 0 15 14"><path d="M1.2 0.4 V12.6 H13.6" fill="none" stroke="#c8c8c8" stroke-width="1"/>
<rect x="3.8" y="0.6" width="3.6" height="11.6" fill="#0f6cc4" stroke="#3f9ceb" stroke-width="0.7"/>
<rect x="7.8" y="3.4" width="3" height="8.8" fill="#292929" stroke="#e6e6e6" stroke-width="0.9"/></svg>
<span class="t" style="left:479.00px;top:411.30px;font-size:11px;line-height:14px;color:#fff;transform:scaleX(0.8613);transform-origin:0 50%;">More Column Charts...</span>
<div class="r" style="left:479px;top:423.2px;width:8.6px;height:1px;background:#fff;"></div>
<div class="r" style="left:471.7px;top:167.7px;width:173.3px;height:123.5px;background:#ececec;border:1px solid #bdbdbd;border-radius:4px;box-shadow:0 2px 5px rgba(0,0,0,.35);"></div>
<span class="t" style="left:480.00px;top:172.20px;font-size:11px;line-height:14px;color:#1f1f1f;transform:scaleX(0.8730);transform-origin:0 50%;font-weight:700;">Clustered Column</span>
<span class="t" style="left:480.00px;top:189.90px;font-size:10.5px;line-height:14px;color:#4a4a4a;transform:scaleX(0.9356);transform-origin:0 50%;">Use this chart type to:</span>
<span class="t" style="left:480.00px;top:202.90px;font-size:10.5px;line-height:14px;color:#4a4a4a;transform:scaleX(0.9248);transform-origin:0 50%;">• Compare values across a few</span>
<span class="t" style="left:480.00px;top:216.20px;font-size:10.5px;line-height:14px;color:#4a4a4a;transform:scaleX(0.9404);transform-origin:0 50%;">categories.</span>
<span class="t" style="left:480.00px;top:242.90px;font-size:10.5px;line-height:14px;color:#4a4a4a;transform:scaleX(0.9225);transform-origin:0 50%;">Use it when:</span>
<span class="t" style="left:480.00px;top:256.20px;font-size:10.5px;line-height:14px;color:#4a4a4a;transform:scaleX(0.9512);transform-origin:0 50%;">• The order of categories is not</span>
<span class="t" style="left:480.00px;top:269.50px;font-size:10.5px;line-height:14px;color:#4a4a4a;transform:scaleX(1.0003);transform-origin:0 50%;">important.</span>
</body></html>
